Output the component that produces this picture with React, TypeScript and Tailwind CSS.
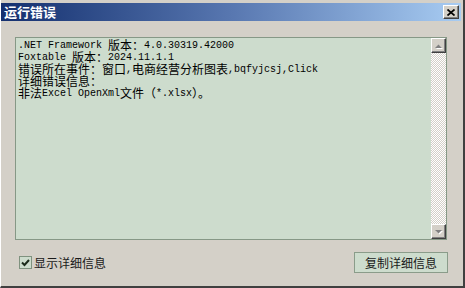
import React from "react";

const CJK = /[\u3000-\u303f\u4e00-\u9fff\uff00-\uffef]/;

function Mixed({ text }: { text: string }) {
  const parts =
    text.match(
      /[\u3000-\u303f\u4e00-\u9fff\uff00-\uffef]+|[^\u3000-\u303f\u4e00-\u9fff\uff00-\uffef]+/g
    ) || [];
  return (
    <>
      {parts.map((p, i) =>
        CJK.test(p) ? (
          <span
            key={i}
            className="inline-block h-[12px] align-top font-['Noto_Sans_CJK_SC',sans-serif] text-[12px] leading-[12px]"
          >
            {p}
          </span>
        ) : (
          <span
            key={i}
            className="inline-block h-[12px] align-top font-['Liberation_Mono',monospace] text-[10px] leading-[13px]"
          >
            {p}
          </span>
        )
      )}
    </>
  );
}

const lines = [
  ".NET Framework 版本：4.0.30319.42000",
  "Foxtable 版本：2024.11.1.1",
  "错误所在事件：窗口,电商经营分析图表,bqfyjcsj,Click",
  "详细错误信息：",
  "非法Excel OpenXml文件（*.xlsx）。",
];

function ArrowBtn({ up }: { up: boolean }) {
  return (
    <div className="h-[15px] w-[15px] flex items-center justify-center bg-[#d4d0c8] border-t border-l border-t-white border-l-white border-b border-r border-b-[#404040] border-r-[#404040] shadow-[inset_-1px_-1px_0_#808080]">
      <svg width="9" height="6" viewBox="0 0 9 6">
        {up ? (
          <>
            <path d="M1 5 L4.5 1.5 L8 5 Z" fill="#ffffff" transform="translate(1,1)" />
            <path d="M1 5 L4.5 1.5 L8 5 Z" fill="#808080" />
          </>
        ) : (
          <>
            <path d="M1 1 L8 1 L4.5 4.5 Z" fill="#ffffff" transform="translate(1,1)" />
            <path d="M1 1 L8 1 L4.5 4.5 Z" fill="#808080" />
          </>
        )}
      </svg>
    </div>
  );
}

export default function App() {
  return (
    <div className="w-[465px] h-[288px] bg-[#d4d0c8] border-l border-l-white border-r-2 border-r-[#404040] border-b-2 border-b-[#404040] pt-[3px] pr-[2px] flex flex-col overflow-hidden">
      {/* Title bar */}
      <div className="h-[18px] flex items-center justify-between bg-gradient-to-r from-[#15306f] via-[#5877b0] to-[#a8ccf2]">
        <span className="pl-[3px] text-white font-bold text-[13px] leading-[18px] font-['Noto_Sans_CJK_SC',sans-serif]">
          运行错误
        </span>
        <div className="mr-[2px] h-[14px] w-[16px] flex items-center justify-center bg-[#d4d0c8] border-t border-l border-t-white border-l-white border-b border-r border-b-[#404040] border-r-[#404040] shadow-[inset_-1px_-1px_0_#808080]">
          <svg width="8" height="7" viewBox="0 0 8 7">
            <path d="M0.5 0.5 L7.5 6.5 M7.5 0.5 L0.5 6.5" stroke="#000" strokeWidth="1.7" />
          </svg>
        </div>
      </div>

      {/* Text box */}
      <div className="ml-[14px] mt-[16px] w-[432px] h-[203px] border border-[#869886] bg-[#cddccd] flex">
        <div className="flex-1 pl-[2px] pt-[1px] text-black text-[10px] leading-[12px]">
          {lines.map((l, i) => (
            <div key={i} className="h-[12px] whitespace-pre">
              <Mixed text={l} />
            </div>
          ))}
        </div>
        <div className="w-[15px] flex flex-col">
          <ArrowBtn up />
          <div className="flex-1 bg-[repeating-conic-gradient(#d4d0c8_0%_25%,#ffffff_0%_50%)] bg-[length:2px_2px]" />
          <ArrowBtn up={false} />
        </div>
      </div>

      {/* Bottom row */}
      <div className="ml-[18px] mt-[12px] w-[429px] flex items-center justify-between">
        <div className="flex items-center gap-[2px]">
          <div className="w-[13px] h-[13px] border border-[#7f927f] bg-[#cddccd] flex items-center justify-center">
            <svg width="9" height="8" viewBox="0 0 9 8">
              <path d="M1 3.5 L3.5 6 L8 1" stroke="#1b2a1b" strokeWidth="2" fill="none" />
            </svg>
          </div>
          <span className="text-[12px] leading-[14px] text-[#1a1a1a] font-['Noto_Sans_CJK_SC',sans-serif]">
            显示详细信息
          </span>
        </div>
        <div className="w-[94px] h-[21px] border border-[#8a9c8a] bg-[#cddccd] flex items-center justify-center text-[12px] text-[#1a1a1a] font-['Noto_Sans_CJK_SC',sans-serif]">
          复制详细信息
        </div>
      </div>
    </div>
  );
}
